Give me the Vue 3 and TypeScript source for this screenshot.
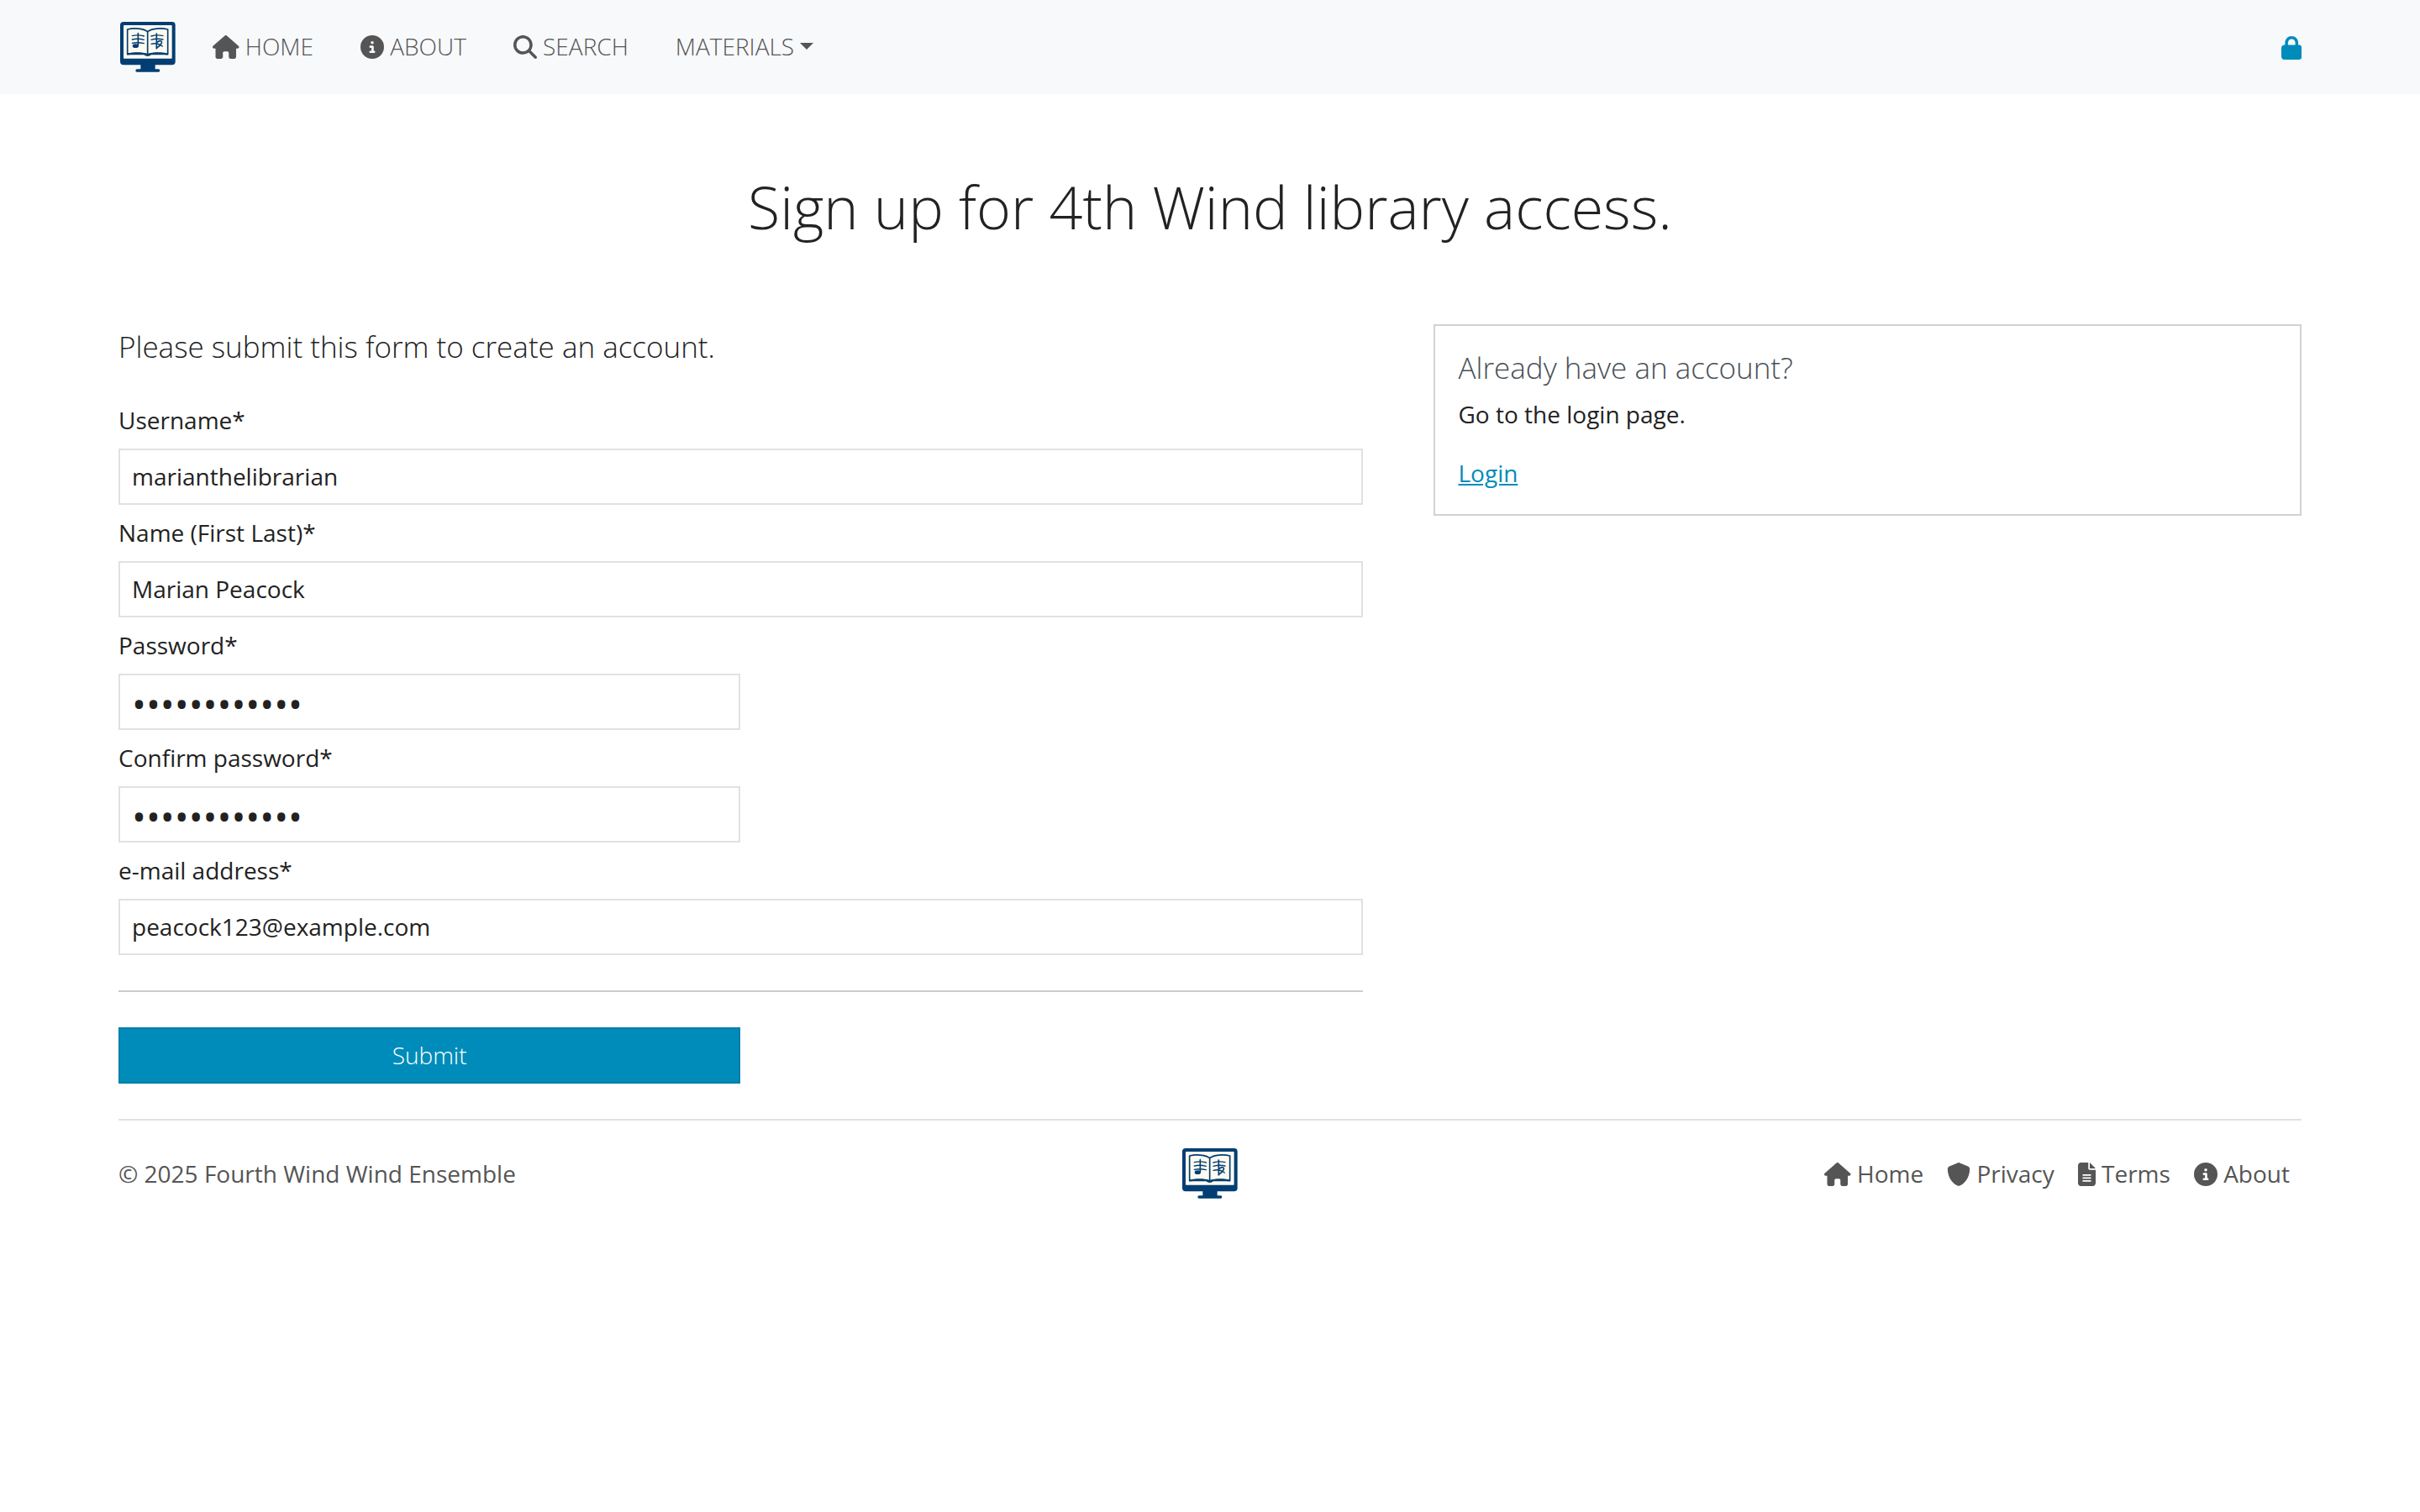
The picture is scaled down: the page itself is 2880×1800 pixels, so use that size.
<script setup lang="ts">
import { reactive } from 'vue'

interface Icon {
  width: number
  path: string
}

interface LinkItem {
  label: string
  href: string
  icon: Icon
}

interface Field {
  id: 'username' | 'name' | 'password' | 'confirm' | 'email'
  label: string
  type: string
  half: boolean
}

const house: Icon = {
  width: 576,
  path: 'M575.8 255.5c0 18-15 32.1-32 32.1l-32 0 .7 160.2c0 2.7-.2 5.4-.5 8.1l0 16.2c0 22.1-17.9 40-40 40l-16 0c-1.1 0-2.2 0-3.3-.1c-1.4 .1-2.8 .1-4.2 .1L416 512l-24 0c-22.1 0-40-17.9-40-40l0-24 0-64c0-17.7-14.3-32-32-32l-64 0c-17.7 0-32 14.3-32 32l0 64 0 24c0 22.1-17.9 40-40 40l-24 0-31.9 0c-1.5 0-3-.1-4.5-.2c-1.2 .1-2.4 .2-3.6 .2l-16 0c-22.1 0-40-17.9-40-40l0-112c0-.9 0-1.9 .1-2.8l0-69.7-32 0c-18 0-32-14-32-32.1c0-9 3-17 10-24L266.4 8c7-7 15-8 22-8s15 2 21 7L564.8 231.5c8 7 12 15 11 24z',
}
const info: Icon = {
  width: 512,
  path: 'M256 512A256 256 0 1 0 256 0a256 256 0 1 0 0 512zM216 336l24 0 0-64-24 0c-13.3 0-24-10.7-24-24s10.7-24 24-24l48 0c13.3 0 24 10.7 24 24l0 88 8 0c13.3 0 24 10.7 24 24s-10.7 24-24 24l-80 0c-13.3 0-24-10.7-24-24s10.7-24 24-24zm40-208a32 32 0 1 1 0 64 32 32 0 1 1 0-64z',
}
const magnifier: Icon = {
  width: 512,
  path: 'M416 208c0 45.9-14.9 88.3-40 122.7L502.6 457.4c12.5 12.5 12.5 32.8 0 45.3s-32.8 12.5-45.3 0L330.7 376c-34.4 25.2-76.8 40-122.7 40C93.1 416 0 322.9 0 208S93.1 0 208 0S416 93.1 416 208zM208 352a144 144 0 1 0 0-288 144 144 0 1 0 0 288z',
}
const shield: Icon = {
  width: 512,
  path: 'M256 0c4.6 0 9.2 1 13.4 2.9L457.7 82.8c22 9.3 38.4 31 38.3 57.2c-.5 99.2-41.3 280.7-213.6 363.2c-16.7 8-36.1 8-52.8 0C57.3 420.7 16.5 239.2 16 140c-.1-26.2 16.3-47.9 38.3-57.2L242.7 2.9C246.8 1 251.4 0 256 0z',
}
const fileLines: Icon = {
  width: 384,
  path: 'M64 0C28.7 0 0 28.7 0 64L0 448c0 35.3 28.7 64 64 64l256 0c35.3 0 64-28.7 64-64l0-288-128 0c-17.7 0-32-14.3-32-32L224 0 64 0zM256 0l0 128 128 0L256 0zM112 256l160 0c8.8 0 16 7.2 16 16s-7.2 16-16 16l-160 0c-8.8 0-16-7.2-16-16s7.2-16 16-16zm0 64l160 0c8.8 0 16 7.2 16 16s-7.2 16-16 16l-160 0c-8.8 0-16-7.2-16-16s7.2-16 16-16zm0 64l160 0c8.8 0 16 7.2 16 16s-7.2 16-16 16l-160 0c-8.8 0-16-7.2-16-16s7.2-16 16-16z',
}

const navLinks: LinkItem[] = [
  { label: 'HOME', href: '#home', icon: house },
  { label: 'ABOUT', href: '#about', icon: info },
  { label: 'SEARCH', href: '#search', icon: magnifier },
]

const footerLinks: LinkItem[] = [
  { label: 'Home', href: '#home', icon: house },
  { label: 'Privacy', href: '#privacy', icon: shield },
  { label: 'Terms', href: '#terms', icon: fileLines },
  { label: 'About', href: '#about', icon: info },
]

const fields: Field[] = [
  { id: 'username', label: 'Username*', type: 'text', half: false },
  { id: 'name', label: 'Name (First Last)*', type: 'text', half: false },
  { id: 'password', label: 'Password*', type: 'password', half: true },
  { id: 'confirm', label: 'Confirm password*', type: 'password', half: true },
  { id: 'email', label: 'e-mail address*', type: 'email', half: false },
]

const account = reactive<Record<Field['id'], string>>({
  username: 'marianthelibrarian',
  name: 'Marian Peacock',
  password: 'shipoopi1234',
  confirm: 'shipoopi1234',
  email: 'peacock123@example.com',
})
</script>

<template>
  <div class="page">
    <svg class="sprite" aria-hidden="true">
      <symbol id="library-logo" viewBox="0 0 210 210">
        <path d="M79 184V166h52v18h12a5 5 0 0 1 0 10H66a5 5 0 0 1 0-10z" fill="#023e73" />
        <rect x="6" y="15" width="197" height="154" rx="12" fill="#023e73" />
        <rect x="18" y="27" width="173" height="119" rx="2" fill="#fffaf0" />
        <g fill="none" stroke="#023e73" stroke-width="5" stroke-linejoin="round">
          <path d="M104 50C90 38 54 36 32 42V131C54 127 88 126 104 133C120 126 154 127 176 131V42C154 36 118 38 104 50Z" />
          <path d="M104 50V135" />
        </g>
        <path d="M32 127C56 122 88 122 104 129C120 122 152 122 176 127V133H116Q112 138 104 138Q96 138 92 133H32z" fill="#023e73" />
        <g fill="none" stroke="#023e73" stroke-width="4" stroke-linecap="round">
          <path d="M49 65Q70 60 91 66M49 78Q70 73 91 79M49 91Q70 87 91 92" />
          <path d="M117 66Q138 60 159 65M117 79Q138 73 159 78M117 94Q138 88 157 102" />
          <path d="M70 56V100M136 57V110" stroke-width="5" />
          <path d="M137 88C150 78 160 84 151 95C147 101 141 105 137 108" stroke-width="5" />
        </g>
        <ellipse cx="61" cy="101" rx="11" ry="7" fill="#023e73" />
      </symbol>
    </svg>

    <header class="navbar">
      <a class="brand" href="#home" aria-label="Fourth Wind library">
        <svg class="logo"><use href="#library-logo" /></svg>
      </a>
      <nav class="nav" aria-label="Main">
        <a v-for="link in navLinks" :key="link.label" class="nav-link" :href="link.href"><svg class="icon" :viewBox="`0 0 ${link.icon.width} 512`"><path :d="link.icon.path" /></svg> {{ link.label }}</a>
        <button class="nav-link" type="button" aria-haspopup="true">MATERIALS<span class="caret"></span></button>
      </nav>
      <a class="lock" href="#login" aria-label="Log in">
        <svg class="icon" viewBox="0 0 448 512"><path d="M144 144l0 48 160 0 0-48c0-44.2-35.8-80-80-80s-80 35.8-80 80zM80 192l0-48C80 64.5 144.5 0 224 0s144 64.5 144 144l0 48 16 0c35.3 0 64 28.7 64 64l0 192c0 35.3-28.7 64-64 64L64 512c-35.3 0-64-28.7-64-64L0 256c0-35.3 28.7-64 64-64l16 0z" /></svg>
      </a>
    </header>

    <main class="container">
      <h1>Sign up for 4th Wind library access.</h1>
      <div class="columns">
        <form class="signup" @submit.prevent>
          <p class="lead">Please submit this form to create an account.</p>
          <div v-for="field in fields" :key="field.id" class="field">
            <label :for="field.id">{{ field.label }}</label>
            <input :id="field.id" v-model="account[field.id]" :type="field.type" :class="{ half: field.half }" required />
          </div>
          <hr />
          <button class="submit half" type="submit">Submit</button>
        </form>
        <aside class="card">
          <h2>Already have an account?</h2>
          <p>Go to the login page.</p>
          <a href="#login">Login</a>
        </aside>
      </div>
    </main>

    <footer class="footer">
      <span>© 2025 Fourth Wind Wind Ensemble</span>
      <a class="brand" href="#home" aria-label="Fourth Wind library">
        <svg class="logo"><use href="#library-logo" /></svg>
      </a>
      <nav class="footer-nav" aria-label="Footer">
        <a v-for="link in footerLinks" :key="link.label" :href="link.href"><svg class="icon" :viewBox="`0 0 ${link.icon.width} 512`"><path :d="link.icon.path" /></svg> {{ link.label }}</a>
      </nav>
    </footer>
  </div>
</template>

<style>
body {
  margin: 0;
  background: #fff;
}
</style>

<style scoped>
.page {
  font-family: "Open Sans", "Noto Sans", sans-serif;
  font-size: 28px;
  line-height: 42px;
  color: #222;
}

.page * {
  box-sizing: border-box;
}

.sprite {
  display: none;
}

.logo {
  display: block;
  width: 70px;
  height: 70px;
}

.icon {
  height: 28px;
  vertical-align: -4px;
  fill: currentColor;
}

.navbar {
  display: flex;
  align-items: center;
  gap: 14px;
  height: 112px;
  padding: 0 141px;
  background: #f8f9fb;
}

.nav {
  display: flex;
  flex: 1;
}

.nav-link {
  padding: 13px 28px 15px;
  border: 0;
  background: none;
  color: #555;
  font: inherit;
  font-weight: 300;
  text-decoration: none;
}

.caret {
  display: inline-block;
  margin-left: 7px;
  vertical-align: 7px;
  border-top: 8px solid;
  border-right: 8px solid transparent;
  border-left: 8px solid transparent;
}

.lock {
  color: #008cba;
}

.container {
  padding: 92px 141px 42px;
}

h1 {
  margin: 0 0 98px;
  font-size: 70px;
  font-weight: 300;
  line-height: 84px;
  text-align: center;
}

.columns {
  display: grid;
  grid-template-columns: repeat(12, 1fr);
  column-gap: 84px;
  align-items: start;
}

.signup {
  grid-column: span 7;
}

.lead {
  margin: 0 0 40px;
  font-size: 35px;
  font-weight: 300;
  line-height: 53px;
}

.field + .field {
  margin-top: 12px;
}

.field label {
  display: block;
  margin-bottom: 13px;
}

.field input {
  display: block;
  width: 100%;
  height: 67px;
  padding: 0 14px 2px;
  border: 2px solid #dee2e6;
  border-radius: 0;
  outline: 0;
  background: #fff;
  color: #222;
  font: inherit;
}

/* Larger type gives the masking dots their full size. */
.field input[type="password"] {
  padding: 4px 14px 0;
  font-size: 45px;
}

.field input.half,
.submit.half {
  width: 50%;
}

hr {
  height: 2px;
  margin: 42px 0;
  border: 0;
  background: #ccc;
}

.submit {
  display: block;
  height: 67px;
  padding: 0 14px 2px;
  border: 2px solid #007ea7;
  background: #008cba;
  color: #fff;
  font: inherit;
  font-weight: 300;
}

.card {
  grid-column: span 5;
  padding: 28px;
  border: 2px solid #d2d2d2;
}

.card h2 {
  margin: 0 0 13px;
  color: #495057;
  font-size: 35px;
  font-weight: 300;
  line-height: 43px;
}

.card p {
  margin: 0 0 28px;
}

.card a {
  display: block;
  width: fit-content;
  color: #008cba;
}

.footer {
  display: grid;
  grid-template-columns: 1fr auto 1fr;
  align-items: center;
  margin: 0 141px;
  padding: 28px 0;
  border-top: 2px solid #dee2e6;
  color: #555;
}

.footer-nav {
  display: flex;
  justify-content: flex-end;
}

.footer-nav a {
  padding: 0 14px;
  color: #555;
  text-decoration: none;
}
</style>
